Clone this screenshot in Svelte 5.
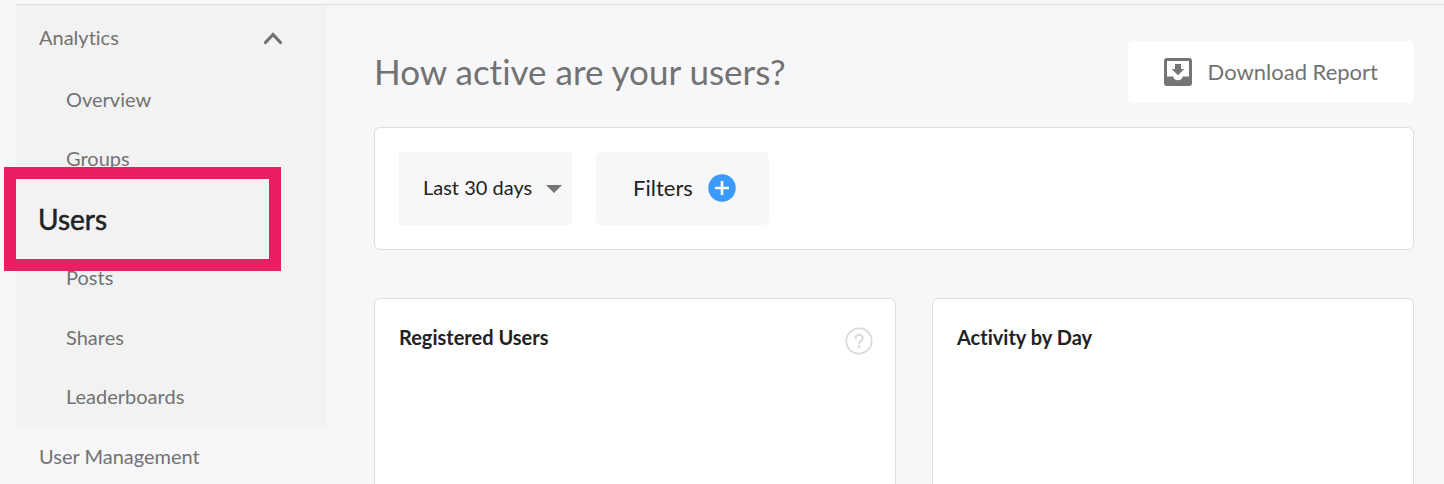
<script>
  const before = ['Overview', 'Groups'];
  const after = ['Posts', 'Shares', 'Leaderboards'];
  let open = $state(true);
  let range = $state('Last 30 days');
</script>

<div class="page">
  <div class="shell">
    <nav class="sidebar" aria-label="Main">
      <section class="group">
        <button class="group-head" aria-expanded={open} onclick={() => (open = !open)}>
          Analytics
          <svg class:flip={!open} width="20" height="20" viewBox="0 0 20 20" aria-hidden="true">
            <path d="M2.500 15.500 10 7.500l7.500 8" fill="none" stroke="#707070" stroke-width="3.200" stroke-linecap="round" />
          </svg>
        </button>
        {#if open}
          <ul>
            {#each before as item}
              <li><a href="#{item.toLowerCase()}">{item}</a></li>
            {/each}
            <li class="current"><a class="callout" href="#users" aria-current="page">Users</a></li>
            {#each after as item}
              <li><a href="#{item.toLowerCase()}">{item}</a></li>
            {/each}
          </ul>
        {/if}
      </section>
      <a class="top-link" href="#user-management">User Management</a>
    </nav>

    <main>
      <header>
        <h1>How active are your users?</h1>
        <button class="download">
          <svg width="28" height="28" viewBox="0 0 28 28" aria-hidden="true">
            <path
              fill="#757575"
              fill-rule="evenodd"
              d="M3 0h22a3 3 0 0 1 3 3v22a3 3 0 0 1-3 3H3a3 3 0 0 1-3-3V3a3 3 0 0 1 3-3ZM3 3v15.500h6.300a4.800 4.800 0 0 0 9.400 0H25V3Z"
            />
            <path fill="#757575" d="M11 6h6v5h3.300L14 17.200 7.700 11H11Z" />
          </svg>
          Download Report
        </button>
      </header>

      <section class="card filters">
        <label class="range">
          <select bind:value={range} aria-label="Date range">
            <option>Last 30 days</option>
          </select>
          <svg width="16" height="8" viewBox="0 0 16 8" aria-hidden="true"><path d="M0 0h16L8 8Z" fill="#757575" /></svg>
        </label>
        <button class="add">
          Filters
          <svg width="28" height="28" viewBox="0 0 28 28" aria-hidden="true">
            <circle cx="14" cy="14" r="13.700" fill="#3b99fc" />
            <path d="M14 7v14M7 14h14" stroke="#fff" stroke-width="2.600" />
          </svg>
        </button>
      </section>

      <div class="charts">
        <section class="card chart">
          <h2>Registered Users</h2>
          <button class="help" aria-label="Help">
            <svg width="28" height="28" viewBox="0 0 28 28" aria-hidden="true" fill="none" stroke="#dadada">
              <circle cx="14" cy="14" r="12.700" stroke-width="1.800" />
              <path d="M10.500 11.200c0-2 1.500-3.500 3.600-3.500s3.600 1.400 3.600 3.200c0 1.600-.9 2.300-1.900 3.100-1.100.8-1.600 1.300-1.600 2.700" stroke-width="2" stroke-linecap="round" />
              <circle cx="14.100" cy="19.800" r="1.400" fill="#dadada" stroke="none" />
            </svg>
          </button>
        </section>
        <section class="card chart">
          <h2>Activity by Day</h2>
        </section>
      </div>
    </main>
  </div>
</div>

<style>
  :global(body) {
    margin: 0;
    background: #f7f7fa;
  }

  .page {
    box-sizing: border-box;
    height: 100vh;
    overflow: hidden;
    padding: 4px 0 0 16px;
    font-family: Lato, 'Open Sans', sans-serif;
    font-size: 20px;
    line-height: 24px;
    font-variant-ligatures: none;
    color: #727272;
  }

  button,
  select {
    font: inherit;
    font-variant-ligatures: none;
    color: inherit;
    border: 0;
    margin: 0;
    cursor: pointer;
  }

  a {
    color: inherit;
    text-decoration: none;
  }

  svg {
    display: block;
    flex: none;
  }

  .shell {
    display: flex;
    height: 100%;
    border-top: 1px solid #dddde0;
  }

  .sidebar {
    flex: none;
    width: 311px;
  }

  .group {
    background: #f2f2f2;
    border-radius: 0 4px 4px 0;
  }

  .group-head {
    display: flex;
    align-items: center;
    justify-content: space-between;
    width: 100%;
    height: 65px;
    padding: 0 44px 2px 23px;
    background: none;
  }

  .flip {
    transform: rotate(180deg);
  }

  ul {
    display: grid;
    grid-auto-rows: 1fr;
    height: 357px;
    margin: 0;
    padding: 0;
    list-style: none;
  }

  li {
    display: flex;
    align-items: center;
    padding: 0 0 2px 50px;
  }

  .current {
    position: relative;
  }

  .callout {
    position: absolute;
    inset: -22px 46px -22px -12px;
    display: flex;
    align-items: center;
    padding-left: 22px;
    border: 12px solid #e91e63;
    background: #f2f2f2;
    color: #222;
    font-size: 28px;
    -webkit-text-stroke: 0.5px #222;
  }

  .top-link {
    display: flex;
    align-items: center;
    height: 57px;
    padding: 0 0 2px 23px;
  }

  main {
    flex: 1;
    min-width: 0;
    display: flex;
    flex-direction: column;
    padding: 36px 30px 0 47px;
  }

  header {
    display: flex;
    align-items: center;
    justify-content: space-between;
    margin-bottom: 24px;
  }

  h1 {
    margin: 0;
    padding-bottom: 2px;
    font-size: 35px;
    line-height: 44px;
    font-weight: 400;
  }

  .download {
    display: flex;
    align-items: center;
    gap: 16px;
    height: 62px;
    padding: 0 36px;
    border-radius: 6px;
    background: #fff;
    font-size: 22px;
  }

  .card {
    box-sizing: border-box;
    border: 1px solid #dedee0;
    border-radius: 6px;
    background: #fff;
  }

  .filters {
    display: flex;
    gap: 24px;
    padding: 24px;
    margin-bottom: 48px;
    color: #222;
  }

  .range {
    display: grid;
    grid-template-columns: 1fr auto;
    align-items: center;
    width: 173px;
    height: 73px;
    background: #f7f7fa;
  }

  .range select {
    grid-area: 1 / 1 / 2 / 3;
    height: 100%;
    padding: 0 0 4px 24px;
    appearance: none;
    background: none;
  }

  .range svg {
    grid-area: 1 / 2;
    margin-right: 10px;
    pointer-events: none;
  }

  .add {
    display: flex;
    align-items: center;
    justify-content: center;
    gap: 15px;
    width: 173px;
    height: 73px;
    padding: 0 0 2px 4px;
    border-radius: 6px;
    background: #f7f7fa;
    font-size: 22px;
  }

  .charts {
    flex: 1;
    display: grid;
    grid-template-columns: 522fr 482fr;
    gap: 36px;
  }

  .chart {
    display: flex;
    align-items: flex-start;
    justify-content: space-between;
    min-height: 240px;
    padding: 26px 22px 24px 24px;
  }

  h2 {
    margin: 0;
    color: #222;
    font-size: 20px;
    line-height: 24px;
    font-weight: 700;
  }

  .help {
    margin-top: 2px;
    padding: 0;
    background: none;
  }
</style>
